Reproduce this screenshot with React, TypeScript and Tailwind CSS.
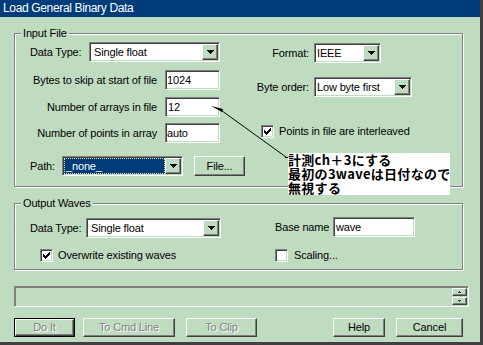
import React from "react";

const SUNKEN =
  "border border-t-[#808080] border-l-[#808080] border-r-white border-b-white shadow-[inset_1px_1px_0_#404040,inset_-1px_-1px_0_#c0dcc0]";
const RAISED =
  "border border-t-white border-l-white border-r-[#404040] border-b-[#404040] shadow-[inset_-1px_-1px_0_#808080]";
const ETCHED =
  "border border-[#808080] shadow-[1px_1px_0_#fff,inset_1px_1px_0_#fff]";

function DownTri() {
  return (
    <svg width="7" height="4" viewBox="0 0 7 4" shapeRendering="crispEdges" fill="#000">
      <rect x="0" y="0" width="7" height="1" />
      <rect x="1" y="1" width="5" height="1" />
      <rect x="2" y="2" width="3" height="1" />
      <rect x="3" y="3" width="1" height="1" />
    </svg>
  );
}

function Dropdown({ className, children }: { className: string; children: React.ReactNode }) {
  return (
    <div className={`flex items-center bg-white ${SUNKEN} ${className}`}>
      <div className="flex-1 flex items-center min-w-0 h-full">{children}</div>
      <div className={`w-[16px] h-[16px] mr-[1px] flex items-center justify-center bg-[#c0dcc0] ${RAISED}`}>
        <DownTri />
      </div>
    </div>
  );
}

function CheckBox({ checked }: { checked?: boolean }) {
  return (
    <div className={`w-[13px] h-[13px] shrink-0 bg-white flex items-center justify-center ${SUNKEN}`}>
      {checked && (
        <svg width="7" height="7" viewBox="0 0 7 7" shapeRendering="crispEdges" fill="#000">
          <rect x="6" y="0" width="1" height="1" />
          <rect x="5" y="1" width="2" height="1" />
          <rect x="0" y="2" width="1" height="1" />
          <rect x="4" y="2" width="3" height="1" />
          <rect x="0" y="3" width="2" height="1" />
          <rect x="3" y="3" width="3" height="1" />
          <rect x="0" y="4" width="5" height="1" />
          <rect x="1" y="5" width="3" height="1" />
          <rect x="2" y="6" width="1" height="1" />
        </svg>
      )}
    </div>
  );
}

function TextField({ className, pad, children }: { className: string; pad: string; children: React.ReactNode }) {
  return (
    <div className={`h-[20px] bg-white flex items-center ${SUNKEN} ${pad} ${className}`}>{children}</div>
  );
}

function Btn({ className, disabled, children }: { className: string; disabled?: boolean; children: React.ReactNode }) {
  return (
    <div
      className={`h-[19px] flex items-center justify-center bg-[#c0dcc0] ${RAISED} ${className} ${
        disabled ? "text-[#808080] [text-shadow:1px_1px_0_#fff]" : "text-black"
      }`}
    >
      {children}
    </div>
  );
}

export default function App() {
  return (
    <div className="relative w-[483px] h-[345px] bg-[#c0dcc0] border-r-[3px] border-b-[3px] border-[#404040] font-['Liberation_Sans',Arial,sans-serif] text-[11px] tracking-[-0.15px] text-black overflow-hidden flex flex-col">
      {/* Title bar */}
      <div className="h-[17px] shrink-0 bg-[#003c7a] text-white text-[12px] tracking-[-0.35px] leading-[17px] pl-[3px]">
        Load General Binary Data
      </div>

      {/* Input File group */}
      <div className={`relative mt-[16px] ml-[14px] w-[449px] h-[154px] shrink-0 flex ${ETCHED}`}>
        <span className="absolute left-[6px] -top-[8px] px-[2px] bg-[#c0dcc0] leading-[14px]">Input File</span>

        <div className="w-[235px] flex flex-col pt-[8px]">
          <div className="flex items-center h-[20px]">
            <span className="ml-[15px] w-[59px]">Data Type:</span>
            <Dropdown className="w-[131px] h-[20px]">
              <span className="pl-[4px]">Single float</span>
            </Dropdown>
          </div>
          <div className="flex items-center h-[20px] mt-[8px]">
            <span className="w-[150px] text-right pr-[8px]">Bytes to skip at start of file</span>
            <TextField className="w-[55px]" pad="pl-[1px]">1024</TextField>
          </div>
          <div className="flex items-center h-[20px] mt-[7px]">
            <span className="w-[150px] text-right pr-[8px]">Number of arrays in file</span>
            <TextField className="w-[55px]" pad="pl-[2px]">12</TextField>
          </div>
          <div className="flex items-center h-[20px] mt-[6px]">
            <span className="w-[150px] text-right pr-[8px]">Number of points in array</span>
            <TextField className="w-[55px]" pad="pl-[1px]">auto</TextField>
          </div>
          <div className="flex items-center h-[20px] mt-[13px]">
            <span className="ml-[15px] w-[32px]">Path:</span>
            <Dropdown className="w-[121px] h-[20px]">
              <div className="ml-[1px] w-[101px] h-[16px] bg-[#003c7a] text-white border border-dotted border-[#e0e0a0] flex items-center pl-[1px]">
                _none_
              </div>
            </Dropdown>
            <Btn className="ml-[11px] w-[51px] !h-[20px]">File...</Btn>
          </div>
        </div>

        <div className="flex-1 flex flex-col pt-[9px]">
          <div className="flex items-center h-[20px]">
            <span className="w-[59px] text-right">Format:</span>
            <Dropdown className="ml-[5px] w-[67px] h-[20px]">
              <span className="pl-[2px]">IEEE</span>
            </Dropdown>
          </div>
          <div className="flex items-center h-[20px] mt-[14px]">
            <span className="w-[59px] text-right">Byte order:</span>
            <Dropdown className="ml-[5px] w-[98px] h-[20px]">
              <span className="pl-[2px]">Low byte first</span>
            </Dropdown>
          </div>
          <div className="flex items-center h-[13px] mt-[28px] ml-[11px]">
            <CheckBox checked />
            <span className="ml-[5px]">Points in file are interleaved</span>
          </div>
        </div>
      </div>

      {/* Output Waves group */}
      <div className={`relative mt-[16px] ml-[14px] w-[449px] h-[67px] shrink-0 flex ${ETCHED}`}>
        <span className="absolute left-[6px] -top-[8px] px-[2px] bg-[#c0dcc0] leading-[14px]">Output Waves</span>

        <div className="w-[235px] flex flex-col pt-[14px]">
          <div className="flex items-center h-[20px]">
            <span className="ml-[15px] w-[56px]">Data Type:</span>
            <Dropdown className="w-[135px] h-[20px]">
              <span className="pl-[4px]">Single float</span>
            </Dropdown>
          </div>
          <div className="flex items-center h-[13px] mt-[11px] ml-[25px]">
            <CheckBox checked />
            <span className="ml-[5px]">Overwrite existing waves</span>
          </div>
        </div>

        <div className="flex-1 flex flex-col pt-[13px]">
          <div className="flex items-center h-[20px] ml-[25px]">
            <span className="w-[58px]">Base name</span>
            <TextField className="w-[82px]" pad="pl-[2px]">wave</TextField>
          </div>
          <div className="flex items-center h-[13px] mt-[12px] ml-[25px]">
            <CheckBox />
            <span className="ml-[6px]">Scaling...</span>
          </div>
        </div>
      </div>

      {/* Status bar */}
      <div className="mt-[16px] ml-[14px] w-[455px] h-[21px] shrink-0 flex items-center justify-end border border-t-[#808080] border-l-[#808080] border-r-white border-b-white shadow-[inset_1px_1px_0_#808080]">
        <div className="flex flex-col gap-[1px] mr-[1px]">
          <div className={`w-[15px] h-[8px] flex items-center justify-center bg-[#c0dcc0] ${RAISED}`}>
            <svg width="3" height="2" viewBox="0 0 3 2" shapeRendering="crispEdges" fill="#404040">
              <rect x="1" y="0" width="1" height="1" />
              <rect x="0" y="1" width="3" height="1" />
            </svg>
          </div>
          <div className={`w-[15px] h-[8px] flex items-center justify-center bg-[#c0dcc0] ${RAISED}`}>
            <svg width="3" height="2" viewBox="0 0 3 2" shapeRendering="crispEdges" fill="#404040">
              <rect x="0" y="0" width="3" height="1" />
              <rect x="1" y="1" width="1" height="1" />
            </svg>
          </div>
        </div>
      </div>

      {/* Buttons */}
      <div className="mt-[11px] ml-[14px] w-[449px] h-[19px] shrink-0 flex items-center">
        <div className="w-[61px] h-[19px] border border-black flex">
          <Btn className="w-full !h-[17px]" disabled>
            Do It
          </Btn>
        </div>
        <Btn className="ml-[8px] w-[92px]" disabled>
          To Cmd Line
        </Btn>
        <Btn className="ml-[11px] w-[71px]" disabled>
          To Clip
        </Btn>
        <div className="flex-1" />
        <Btn className="w-[52px]">Help</Btn>
        <Btn className="ml-[11px] w-[67px]">Cancel</Btn>
      </div>

      {/* Annotation arrow */}
      <svg className="absolute left-0 top-0 pointer-events-none" width="483" height="345" viewBox="0 0 483 345">
        <polygon points="211,106 223,109 222,112" fill="#000" />
        <line x1="221.5" y1="110.5" x2="286" y2="157" stroke="#000" strokeWidth="1" />
        <line x1="285" y1="157.5" x2="289" y2="157.5" stroke="#000" strokeWidth="1" />
      </svg>

      {/* Annotation note */}
      <div className="absolute left-[288px] top-[153px] w-[162px] h-[42px] bg-white text-black font-['Noto_Sans_CJK_JP','Noto_Sans_CJK_SC',sans-serif] font-bold text-[13px] leading-[14px] tracking-[0.3px] whitespace-nowrap flex flex-col">
        <div className="h-[14px]">計測ch＋3にする</div>
        <div className="h-[14px]">最初の3waveは日付なので</div>
        <div className="h-[14px]">無視する</div>
      </div>
    </div>
  );
}
